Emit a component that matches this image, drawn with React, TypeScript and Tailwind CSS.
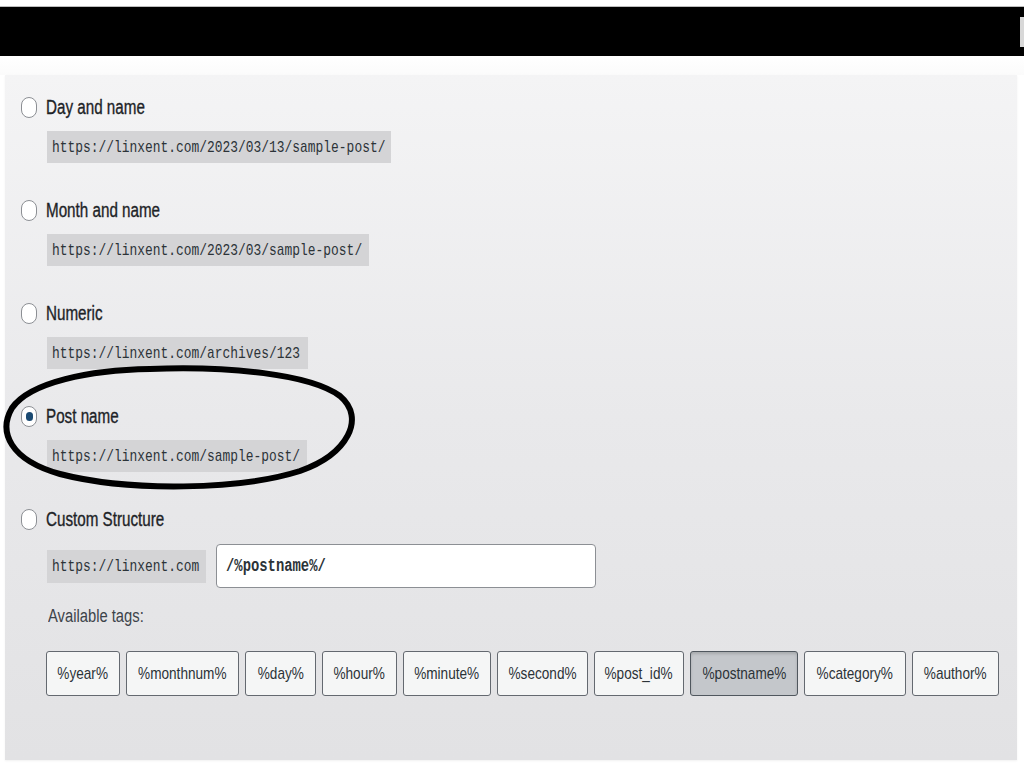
import React from "react";

const SANS = "font-['Liberation_Sans',Arial,sans-serif]";
const MONO = "font-['Liberation_Mono','DejaVu_Sans_Mono',monospace]";

function Radio({ checked = false }: { checked?: boolean }) {
  return (
    <span className="flex items-center justify-center w-[16px] h-[21px] rounded-full border border-[#8c8f94] bg-white shrink-0">
      {checked && <span className="w-[7px] h-[9px] rounded-full bg-[#1b4a72]" />}
    </span>
  );
}

function Code({ children, w, h = "h-[32px]" }: { children: React.ReactNode; w: string; h?: string }) {
  return (
    <div className={`${w} ${h} shrink-0 bg-[#d4d4d6] text-[#2c3338] px-[5px] flex items-center overflow-visible`}>
      <span className={`inline-block origin-left scale-x-[0.76] whitespace-nowrap text-[17px] leading-none ${MONO}`}>
        {children}
      </span>
    </div>
  );
}

function Label({ children }: { children: React.ReactNode }) {
  return (
    <span
      className={`inline-block origin-left scale-x-[0.76] whitespace-nowrap ${SANS} text-[20px] text-[#1d2327] leading-none [-webkit-text-stroke:0.35px_#1d2327]`}
    >
      {children}
    </span>
  );
}

function Option({ label, url, w, checked = false }: { label: string; url: string; w: string; checked?: boolean }) {
  return (
    <div className="mb-[35px]">
      <div className="flex items-center h-[24px] gap-[9px]">
        <Radio checked={checked} />
        <Label>{label}</Label>
      </div>
      <div className="mt-[12px] ml-[26px]">
        <Code w={w}>{url}</Code>
      </div>
    </div>
  );
}

const tags: { t: string; w: string }[] = [
  { t: "%year%", w: "w-[74px]" },
  { t: "%monthnum%", w: "w-[113px]" },
  { t: "%day%", w: "w-[71px]" },
  { t: "%hour%", w: "w-[75px]" },
  { t: "%minute%", w: "w-[88px]" },
  { t: "%second%", w: "w-[91px]" },
  { t: "%post_id%", w: "w-[90px]" },
  { t: "%postname%", w: "w-[108px]" },
  { t: "%category%", w: "w-[102px]" },
  { t: "%author%", w: "w-[87px]" },
];

export default function App() {
  return (
    <div className="relative w-[1024px] h-[768px] bg-white overflow-hidden">
      <div className="h-[7px] bg-white border-b border-[#bdbdbd]" />
      <div className="h-[49px] bg-black flex justify-end">
        <div className="w-[4px] h-[30px] mt-[10px] bg-[#d8d8d8]" />
      </div>
      <div className="h-[19px] bg-linear-to-b from-white to-[#fbfbfb]" />
      <div className="ml-[5px] w-[1012px] h-[685px] bg-linear-to-b from-[#f4f4f5] via-[#e9e9eb] to-[#e2e2e4] pl-[16px] pt-[20px] shadow-[0_1px_2px_rgba(0,0,0,0.06)]">
        <Option label="Day and name" url="https://linxent.com/2023/03/13/sample-post/" w="w-[344px]" />
        <Option label="Month and name" url="https://linxent.com/2023/03/sample-post/" w="w-[322px]" />
        <Option label="Numeric" url="https://linxent.com/archives/123" w="w-[261px]" />
        <Option label="Post name" url="https://linxent.com/sample-post/" w="w-[260px]" checked />

        <div>
          <div className="flex items-center h-[24px] gap-[9px]">
            <Radio />
            <Label>Custom Structure</Label>
          </div>
          <div className="mt-[13px] ml-[26px] flex items-center gap-[10px]">
            <Code w="w-[159px]" h="h-[33px]">
              https://linxent.com
            </Code>
            <div className="w-[380px] h-[44px] bg-white border border-[#8c8f94] rounded-[4px] flex items-center pl-[9px]">
              <span
                className={`inline-block origin-left scale-x-[0.77] whitespace-nowrap ${MONO} text-[18px] font-bold text-[#2c3338] leading-none`}
              >
                /%postname%/
              </span>
            </div>
          </div>
          <div className="mt-[16px] ml-[27px] h-[24px] flex items-center">
            <span
              className={`inline-block origin-left scale-x-[0.82] whitespace-nowrap ${SANS} text-[18px] text-[#3c434a] leading-none`}
            >
              Available tags:
            </span>
          </div>
          <div className="mt-[23px] ml-[25px] flex gap-[6px]">
            {tags.map(({ t, w }) => {
              const sel = t === "%postname%";
              return (
                <div
                  key={t}
                  className={`${w} h-[45px] shrink-0 flex items-center justify-center rounded-[3px] border ${
                    sel
                      ? "bg-[#c4c7cb] border-[#50575e] shadow-[inset_0_2px_3px_rgba(0,0,0,0.15)]"
                      : "bg-[#f5f6f6] border-[#646970]"
                  }`}
                >
                  <span
                    className={`inline-block scale-x-[0.8] whitespace-nowrap ${SANS} text-[17px] text-[#2c3338] leading-none`}
                  >
                    {t}
                  </span>
                </div>
              );
            })}
          </div>
        </div>
      </div>

      <svg
        className="absolute left-0 top-[360px] pointer-events-none"
        width="362"
        height="134"
        viewBox="0 0 362 134"
      >
        <path
          d="M 150 9 C 230 6, 310 14, 340 36 C 366 58, 348 94, 300 111 C 240 130, 130 132, 60 114 C 10 100, -2 72, 12 48 C 30 22, 90 10, 150 9 Z"
          fill="none"
          stroke="#000"
          strokeWidth="6"
          strokeLinejoin="round"
        />
      </svg>
    </div>
  );
}
